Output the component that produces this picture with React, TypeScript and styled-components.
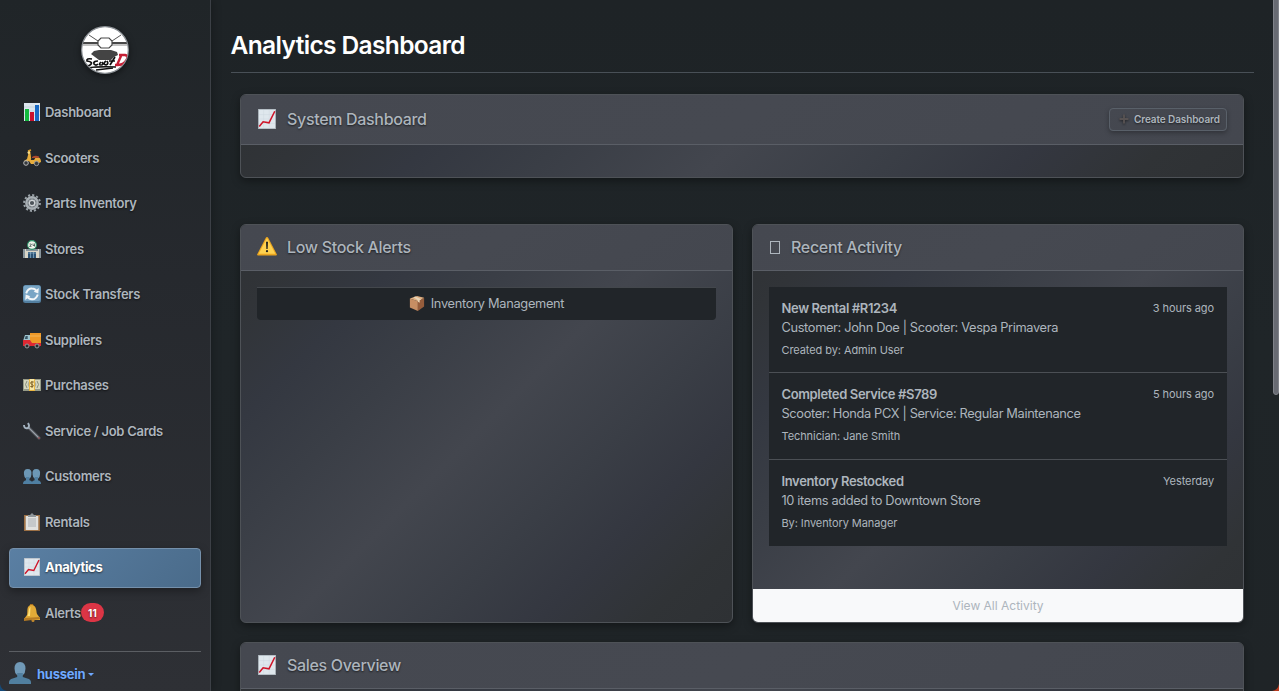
import React from "react";
import styled, { createGlobalStyle, css } from "styled-components";

const GlobalStyle = createGlobalStyle`
  * { box-sizing: border-box; }
  html, body { margin: 0; padding: 0; height: 691px; overflow: hidden; background: #1f2427; }
  body { font-family: Inter, "Liberation Sans", sans-serif; color: #adb5bd; font-size: 13px; }
`;

const Shell = styled.div`
  position: relative;
  display: flex;
  width: 1279px;
  height: 691px;
  overflow: hidden;
  background: linear-gradient(180deg, #1e2326 0%, #1f2528 50%, #1f2427 100%);
`;

const Sidebar = styled.aside`
  width: 211px;
  flex: none;
  display: flex;
  flex-direction: column;
  padding: 26px 9px 0;
  border-right: 1px solid #3c4046;
  background: linear-gradient(180deg, #202528 0%, #26292e 40%, #2e3035 100%);
  box-shadow: 2px 0 8px rgba(0, 0, 0, 0.22);
`;

const Logo = styled.div`
  width: 48px;
  height: 48px;
  margin: 0 auto 18.5px;
  border-radius: 50%;
  box-shadow: 0 2px 6px rgba(0, 0, 0, 0.5);
  svg { display: block; }
`;

const Nav = styled.nav`
  display: flex;
  flex-direction: column;
  gap: 5.5px;
`;

const NavItem = styled.a<{ $active?: boolean }>`
  display: flex;
  align-items: center;
  height: 40px;
  flex: none;
  padding: 0 0 0.6px 13px;
  border: 1px solid transparent;
  border-radius: 4px;
  font-weight: 600;
  font-size: 13px;
  letter-spacing: -0.28px;
  color: #adb5bd;
  text-shadow: 0 1px 2px rgba(0, 0, 0, 0.6);
  ${(p) =>
    p.$active &&
    css`
      color: #fff;
      font-weight: 700;
      letter-spacing: -0.32px;
      border-color: #7590ab;
      background: linear-gradient(135deg, #5a7fa3 0%, #4a6b8a 100%);
      box-shadow: 0 3px 8px rgba(0, 0, 0, 0.35);
    `}
  svg { flex: none; margin-right: 4px; }
`;

const Count = styled.span`
  display: flex;
  align-items: center;
  justify-content: center;
  width: 23px;
  height: 19px;
  border-radius: 10px;
  background: #dc3545;
  color: #fff;
  font-size: 10px;
  font-weight: 700;
  letter-spacing: 0;
`;

const UserRow = styled.div`
  display: flex;
  align-items: center;
  margin-top: 18px;
  padding-top: 10px;
  border-top: 1px solid #5b5e63;
  color: #6ea8fe;
  font-size: 13px;
  font-weight: 700;
  letter-spacing: -0.25px;
  text-shadow: 0 1px 2px rgba(0, 0, 0, 0.5);
  span { margin: 2px 0 0 6px; }
`;

const Caret = styled.i`
  margin: 2px 0 0 3px;
  border: 3px solid transparent;
  border-top-color: #6ea8fe;
  border-bottom: 0;
`;

const Main = styled.main`
  flex: 1;
  min-width: 0;
  padding: 0 25px 0 20px;
`;

const PageTitle = styled.h1`
  margin: 0 0 21px;
  height: 73px;
  padding-top: 30px;
  border-bottom: 1px solid #495057;
  color: #fff;
  font-size: 24.5px;
  line-height: 30px;
  font-weight: 600;
  letter-spacing: -0.63px;
  text-indent: -0.5px;
`;

const Content = styled.div`
  padding: 0 10px 0 9px;
`;

const Columns = styled.div`
  display: grid;
  grid-template-columns: 493px 492px;
  gap: 19px;
  height: 399px;
  margin: 46px 0 19px;
`;

const Card = styled.section<{ $height?: number }>`
  display: flex;
  flex-direction: column;
  ${(p) => p.$height && `height: ${p.$height}px;`}
  border: 1px solid #4e5257;
  border-radius: 6px;
  overflow: hidden;
  background: linear-gradient(135deg, #2e3134 0%, #313438 10%, #343841 22%, #3a3e46 34%, #43464e 50%, #3a3e46 66%, #343740 78%, #303336 90%, #2e3134 100%);
  box-shadow: 0 3px 8px rgba(0, 0, 0, 0.38);
`;

const CardHeader = styled.header<{ $height: number }>`
  display: flex;
  align-items: center;
  height: ${(p) => p.$height}px;
  flex: none;
  padding: 0 16px;
  border-bottom: 1px solid #5a5e66;
  background: linear-gradient(145deg, #454850, #464951 50%, #44474f);
  svg { flex: none; margin-bottom: 1px; }
`;

const CardTitle = styled.h2<{ $gap?: number }>`
  margin: 0 auto 2px ${(p) => p.$gap ?? 10}px;
  color: #adb5bd;
  font-size: 16px;
  font-weight: 500;
  letter-spacing: -0.32px;
  text-shadow: 0 1px 2px rgba(0, 0, 0, 0.6);
`;

const CreateButton = styled.button`
  display: flex;
  align-items: center;
  gap: 5px;
  width: 118px;
  height: 23px;
  padding: 0 0 2px 9px;
  border: 1px solid #596069;
  border-radius: 4px;
  background: linear-gradient(145deg, #454850, #42454d);
  color: #adb5bd;
  font: 600 10px Inter, sans-serif;
  letter-spacing: -0.1px;
  white-space: nowrap;
  text-shadow: 0 1px 2px rgba(0, 0, 0, 0.6);
  box-shadow: 0 2px 5px rgba(0, 0, 0, 0.3);
  svg { margin: 1px 0 0; filter: drop-shadow(0 1px 1px rgba(0, 0, 0, 0.5)); }
`;

const MissingGlyph = styled.span`
  width: 10px;
  height: 13px;
  margin-left: 1px;
  border: 1px solid #adb5bd;
`;

const InventoryLink = styled.a`
  display: flex;
  align-items: center;
  justify-content: center;
  gap: 6px;
  height: 33px;
  margin: 16px 16px 0;
  padding-bottom: 2px;
  border-top: 1px solid #43474c;
  border-radius: 0 0 4px 4px;
  background: #212529;
  font-size: 12.8px;
  letter-spacing: -0.3px;
`;

const ActivityList = styled.div`
  margin: 16px 16px 43px;
`;

const Activity = styled.article`
  height: 87px;
  padding: 10px 13px 0 12.5px;
  background: #212529;
  &:not(:last-child) { border-bottom: 1px solid #4b4f54; }
  &:first-child, &:last-child { height: 86px; }
  p { margin: 0; font-size: 12.8px; line-height: 20px; letter-spacing: -0.35px; }
`;

const ActivityTop = styled.div`
  display: flex;
  align-items: center;
  justify-content: space-between;
  height: 21px;
  font-weight: 600;
  letter-spacing: -0.36px;
`;

const Small = styled.small<{ $block?: boolean }>`
  display: ${(p) => (p.$block ? "block" : "inline")};
  margin-top: ${(p) => (p.$block ? 4 : 1)}px;
  font-size: 11px;
  line-height: 17px;
  font-weight: 400;
  letter-spacing: -0.08px;
`;

const CardFooter = styled.footer`
  display: flex;
  align-items: center;
  justify-content: center;
  flex: 1;
  background: #f8f9fa;
  color: #adb5bd;
  font-size: 12px;
`;

const ScrollThumb = styled.div`
  position: absolute;
  top: -4px;
  right: 0;
  width: 6px;
  height: 399px;
  border: 1px solid #80838a;
  border-radius: 3px;
  background: #686b73;
`;

const Corner = styled.svg<{ $side: "left" | "right" }>`
  position: absolute;
  bottom: 0;
  ${(p) => p.$side}: 0;
`;

const icons: Record<string, React.ReactNode> = {
  bars: (
    <>
      <path fill="#dce6ee" d="M1 0h16v18H1z" />
      <path stroke="#b2c0cb" strokeWidth=".5" d="M1 4h16M1 8h16M1 12h16" />
      <path fill="#12b83e" d="M2 6h4v12H2z" />
      <path fill="#c9102c" d="M7 9h4v9H7z" />
      <path fill="#1769c4" d="M12 2h4v16h-4z" />
    </>
  ),
  chart: (
    <>
      <path fill="#b6bfc6" d="M1 0h16v18H1z" />
      <path fill="#dfe7ed" d="M1.8.8h14.4v16.4H1.8z" />
      <path stroke="#cdd7de" strokeWidth=".4" d="M2 5h14M2 9h14M2 13h14M6 1v16M11 1v16" />
      <path fill="none" stroke="#cf1529" strokeWidth="1.4" d="m2 15.8 3.5-4.3 5.3 1L16 2" />
    </>
  ),
  scooter: (
    <>
      <path fill="none" stroke="#d99a27" strokeWidth="1.6" d="M5 2 8 1M6.4 2l1 8" />
      <path fill="#e7ad3d" d="M5.5 4 4 10l-3 2 1 1 4-1 2 3h6l4-2c0-4-2-5-5-5l-2 3H8L7 4z" />
      <path fill="#ac492d" d="M9 8q3-2 7-.6v1.5L9 9z" />
      <circle cx="3" cy="14" r="2.3" fill="#34383b" stroke="#bbb" strokeWidth="1" />
      <circle cx="13.5" cy="14.5" r="2.2" fill="#34383b" stroke="#999" strokeWidth="1" />
      <circle cx="5.8" cy="3.6" r="1.3" fill="#f6dd8b" />
    </>
  ),
  gear: (
    <>
      <circle cx="9" cy="9" r="7.9" fill="none" stroke="#9ba3a9" strokeWidth="2" strokeDasharray="2.1 2.03" />
      <circle cx="9" cy="9" r="5.8" fill="#787f85" stroke="#a9b0b5" strokeWidth="2.2" />
      <path stroke="#aab1b6" strokeWidth=".7" d="M9 3v12M3 9h12M5 5l8 8M5 13l8-8" />
      <circle cx="9" cy="9" r="2.7" fill="#4b5258" stroke="#d1d5d8" strokeWidth="1.2" />
    </>
  ),
  store: (
    <>
      <path fill="#d9d5c7" d="M1 9h16v9H1z" />
      <path fill="#87949b" d="M0 9h2v9H0zM16 9h2v9h-2zM3 9h12v2H3z" />
      <path fill="#2c5274" d="M5 12h8v6H5z" />
      <path stroke="#8db1c9" strokeWidth=".7" d="M7.5 12v6M10.5 12v6M5 13h8" />
      <circle cx="9" cy="5" r="4.4" fill="#f3f5ed" stroke="#2f946b" strokeWidth="1.1" />
      <path fill="none" stroke="#455b54" strokeWidth=".8" d="M6.5 4h1.7v1L6.5 6.4h2M10 3.5v2h2M11.5 3.5v3" />
    </>
  ),
  transfer: (
    <>
      <rect width="18" height="18" rx="2.5" fill="#527e9f" />
      <rect x=".5" y=".5" width="17" height="15.5" rx="2" fill="#79a5c5" />
      <path fill="none" stroke="#f3f6f8" strokeWidth="2" d="M3.2 8.3Q5 3.3 9 3.5q3 0 4.5 2.5M14.8 9.5Q13 14.6 9 14.3q-3 0-4.5-2.5" />
      <path fill="#f3f6f8" d="m15.8 3-.5 5.5-4.6-1.7zM2.2 15l.5-5.5 4.6 1.7z" />
    </>
  ),
  truck: (
    <>
      <path fill="#ee9827" d="M7 2h11v10H7z" />
      <path stroke="#f4b65b" d="M7 5h11" />
      <path fill="#9fc5cf" d="M2 4h5v6H0z" />
      <path fill="#de2832" d="M0 9h7l2 3h9v3H0z" />
      <path fill="#3a5666" d="M2.7 5h2v3h-3z" />
      <circle cx="4" cy="15" r="2" fill="#292b2d" stroke="#92989b" />
      <circle cx="14" cy="15" r="2" fill="#292b2d" stroke="#92989b" />
    </>
  ),
  money: (
    <>
      <path fill="#969b88" d="M0 3h18v12H0z" />
      <path fill="#d5d5bd" d="M1 4h16v9H1z" />
      <circle cx="9" cy="8.5" r="4.2" fill="#a8ae9b" />
      <path fill="#eab642" d="M6 3h6v12H6z" />
      <path fill="#f6e7a7" d="M7 3h4v11H7z" />
      <path fill="none" stroke="#85672b" strokeWidth="1" d="M10.8 6H8q-1 2 1 2.5t1 2H7.3M9 5v7" />
      <path fill="none" stroke="#878e7c" d="M4 5Q1 8.5 4 12M14 5q3 3.5 0 7" />
    </>
  ),
  wrench: (
    <>
      <path stroke="#464a50" strokeWidth="3.4" strokeLinecap="round" d="m6 6 10 10" />
      <path stroke="#9aa1a8" strokeWidth="1.3" d="m5 5 11 11" />
      <path fill="none" stroke="#a5b4c1" strokeWidth="1.9" d="M1 3q0 4 4 3 2-2 0-5" />
      <circle cx="16" cy="16" r="1" fill="#8c5257" />
    </>
  ),
  customers: (
    <>
      <path fill="#6c97b5" d="M1 7.5Q.2 2 4.7 2t3.7 5.5q-.2 3-1.7 4H2.9Q1.2 10.5 1 7.5zM9.6 7.5Q8.8 2 13.3 2T17 7.5q-.2 3-1.7 4h-3.8q-1.7-1-1.9-4z" />
      <path fill="#4f7fa2" d="M0 17q0-3 3-3.7V10h3.4v3.3Q9 14 9 15q0-1 2.6-1.7V10H15v3.3q3 .7 3 3.7z" />
    </>
  ),
  clipboard: (
    <>
      <path fill="#9c7045" d="M1 2h16v16H1z" />
      <path fill="#e1e1df" d="M2.7 3h12.6v14H2.7z" />
      <path fill="#c5c8ca" d="M5 5h8v9H5z" />
      <path fill="#8f969a" d="M5 2h2l2-2 2 2h2v2H5z" />
    </>
  ),
  bell: (
    <>
      <path fill="#a56d1d" d="M7 0h3l1 3-4 1z" />
      <path fill="#e2aa37" d="M8 1c6 0 5 6 6 9l3 4v2H1v-1l3-4C5 7 3 2 8 1z" />
      <path fill="#ffe179" d="M7.5 3C5 4 6.4 9 4.4 12H7z" />
      <path fill="#b67b24" d="m1 14 16-1v2L1 17z" />
      <circle cx="10" cy="16.5" r="1.5" fill="#c2872c" />
    </>
  ),
  warning: (
    <>
      <path fill="#eba51f" d="M9 0q.8 0 1.2.8l7.6 14.8q.5 1-.8 1H1q-1.3 0-.8-1L7.8.8Q8.2 0 9 0z" />
      <path fill="#ffd250" d="m9 1 7.5 14h-15z" />
      <path fill="#25231d" d="M8.1 4.3h1.8l-.3 6.4H8.4z" />
      <circle cx="9" cy="12.8" r="1" fill="#25231d" />
    </>
  ),
  box: (
    <>
      <path fill="#c78e63" d="m1 4 9 3v11l-9-4z" />
      <path fill="#965d3c" d="m10 7 7-4v10l-7 5z" />
      <path fill="#dfae80" d="m1 4 8-3 8 2-7 4z" />
      <path fill="#e9d5b8" d="m5 2.5 2-.8 7 3-2 1v3l-2-1V6z" />
    </>
  ),
  user: (
    <>
      <path fill="#719ab8" d="M4.5 5.5Q4.5 0 9 0t4.5 5.5q0 3.5-2.2 5.3H6.7Q4.5 9 4.5 5.5z" />
      <path fill="#517f9f" d="M0 18v-1.5q0-2.2 3-3l3.7-1.2V9h4.6v3.3l3.7 1.2q3 .8 3 3V18z" />
    </>
  ),
  plus: <path stroke="#575252" strokeWidth="3.4" d="M9 1v16M1 9h16" />,
};

function Icon({ name, size = 18 }: { name: string; size?: number }) {
  return (
    <svg width={size} height={size} viewBox="0 0 18 18" aria-hidden="true">
      {icons[name]}
    </svg>
  );
}

function LogoMark() {
  return (
    <svg width="48" height="48" viewBox="0 0 48 48">
      <defs>
        <clipPath id="logo-disc"><circle cx="24" cy="24" r="23" /></clipPath>
      </defs>
      <circle cx="24" cy="24" r="23.3" fill="#fff" stroke="#8c9196" strokeWidth="1.2" />
      <g clipPath="url(#logo-disc)">
        <path stroke="#555" strokeWidth="1" d="m8 9 9 6M40 9l-9 6" />
        <path stroke="#484848" strokeWidth="1.8" d="M0 17h18M30 17h18" />
        <path stroke="#888" strokeWidth="1" d="M2 19h15M31 19h15" />
        <path fill="#fff" stroke="#484848" strokeWidth="1.2" d="M20 12h8l3 3v4l-3 3h-8l-3-3v-4z" />
        <path fill="#444" d="m13 25 5-1h12l6 2 1 3-4 2-3 3H18l-4-3-4-3z" />
        <path fill="none" stroke="#111" strokeWidth="1.7" d="M11 33q-6-1-5 2 7 1 3 4-3 2-6 0M17 35q-5 0-4 3 2 2 4 0M20 36q-3 3 0 3t1-3M25 35q-4 3 0 4 3-1 1-4M34 31l-5 8M28 35h6" />
        <path stroke="#111" strokeWidth="1.3" d="M6 42q12-2 29-1M15 44l17-2" />
        <path fill="none" stroke="#c51f35" strokeWidth="2.4" d="M38 29h6q5 1 0 7-2 3-8 3l4-9M34 39h5" />
      </g>
    </svg>
  );
}

const navigation = [
  { label: "Dashboard", icon: "bars" },
  { label: "Scooters", icon: "scooter" },
  { label: "Parts Inventory", icon: "gear" },
  { label: "Stores", icon: "store" },
  { label: "Stock Transfers", icon: "transfer" },
  { label: "Suppliers", icon: "truck" },
  { label: "Purchases", icon: "money" },
  { label: "Service / Job Cards", icon: "wrench" },
  { label: "Customers", icon: "customers" },
  { label: "Rentals", icon: "clipboard" },
  { label: "Analytics", icon: "chart" },
  { label: "Alerts", icon: "bell", count: 11 },
];

const activities = [
  { title: "New Rental #R1234", time: "3 hours ago", text: "Customer: John Doe | Scooter: Vespa Primavera", by: "Created by: Admin User" },
  { title: "Completed Service #S789", time: "5 hours ago", text: "Scooter: Honda PCX | Service: Regular Maintenance", by: "Technician: Jane Smith" },
  { title: "Inventory Restocked", time: "Yesterday", text: "10 items added to Downtown Store", by: "By: Inventory Manager" },
];

export default function App() {
  return (
    <Shell>
      <GlobalStyle />
      <Sidebar>
        <Logo><LogoMark /></Logo>
        <Nav>
          {navigation.map((item) => (
            <NavItem key={item.label} $active={item.label === "Analytics"}>
              <Icon name={item.icon} />
              {item.label}
              {item.count && <Count>{item.count}</Count>}
            </NavItem>
          ))}
        </Nav>
        <UserRow>
          <Icon name="user" size={22} />
          <span>hussein</span>
          <Caret />
        </UserRow>
      </Sidebar>
      <Main>
        <PageTitle>Analytics Dashboard</PageTitle>
        <Content>
          <Card $height={84}>
            <CardHeader $height={50}>
              <Icon name="chart" size={20} />
              <CardTitle>System Dashboard</CardTitle>
              <CreateButton><Icon name="plus" size={10} />Create Dashboard</CreateButton>
            </CardHeader>
          </Card>
          <Columns>
            <Card>
              <CardHeader $height={46}>
                <Icon name="warning" size={20} />
                <CardTitle>Low Stock Alerts</CardTitle>
              </CardHeader>
              <InventoryLink><Icon name="box" size={16} />Inventory Management</InventoryLink>
            </Card>
            <Card>
              <CardHeader $height={46}>
                <MissingGlyph />
                <CardTitle $gap={11}>Recent Activity</CardTitle>
              </CardHeader>
              <ActivityList>
                {activities.map((a) => (
                  <Activity key={a.title}>
                    <ActivityTop>{a.title}<Small>{a.time}</Small></ActivityTop>
                    <p>{a.text}</p>
                    <Small $block>{a.by}</Small>
                  </Activity>
                ))}
              </ActivityList>
              <CardFooter>View All Activity</CardFooter>
            </Card>
          </Columns>
          <Card $height={120}>
            <CardHeader $height={46}>
              <Icon name="chart" size={20} />
              <CardTitle>Sales Overview</CardTitle>
            </CardHeader>
          </Card>
        </Content>
      </Main>
      <ScrollThumb />
      <Corner $side="left" width="8" height="8" viewBox="0 0 8 8">
        <path fill="#164a78" d="M0 1q1 6 7 7H0z" />
      </Corner>
      <Corner $side="right" width="8" height="8" viewBox="0 0 8 8">
        <path fill="#b83b20" d="M8 1q-1 6-7 7h7z" />
      </Corner>
    </Shell>
  );
}
